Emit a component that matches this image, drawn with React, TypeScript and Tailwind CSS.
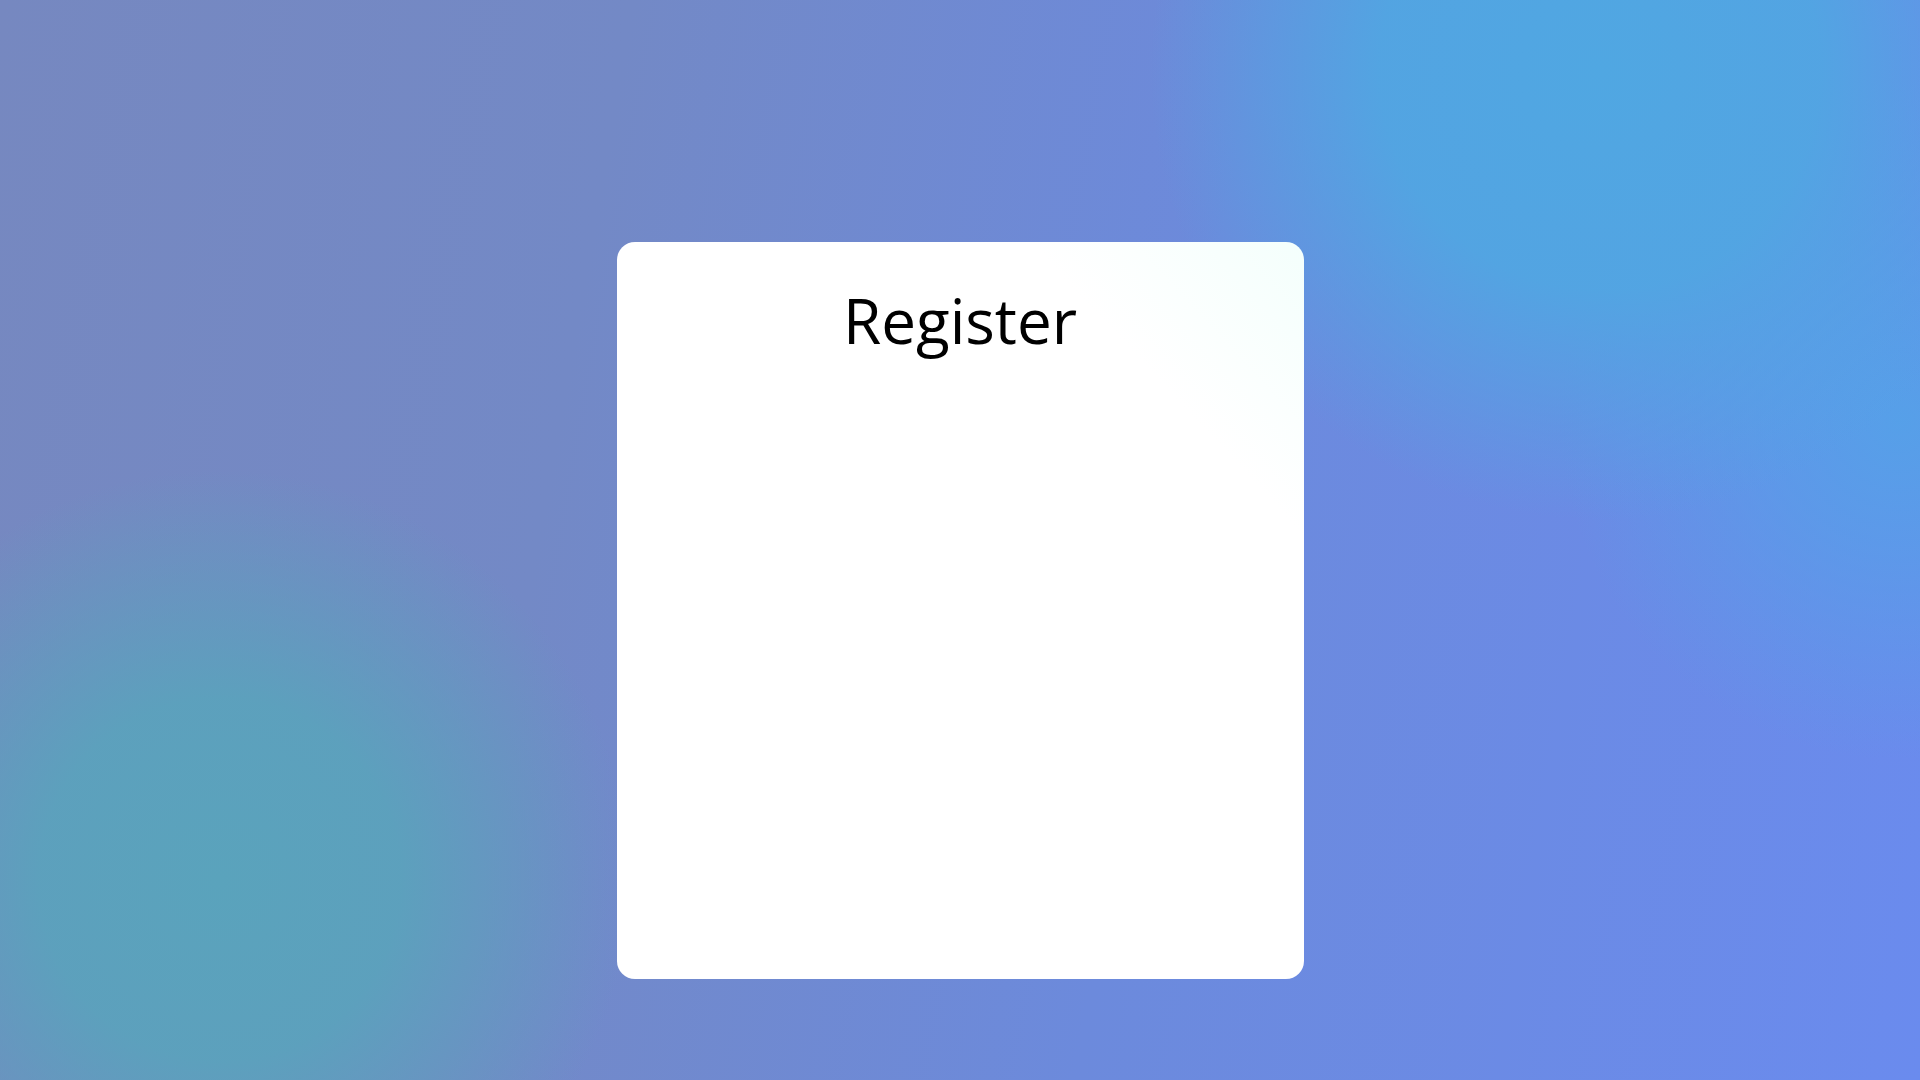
export default function App() {
  return (
    <div className="min-h-screen w-full flex justify-center pt-[242px] bg-[radial-gradient(circle_at_1600px_70px,rgba(80,167,226,1)_0px,rgba(80,167,226,0.9)_220px,rgba(80,167,226,0)_450px),radial-gradient(circle_at_1900px_420px,rgba(84,162,232,0.9)_0px,rgba(84,162,232,0.6)_130px,rgba(84,162,232,0)_340px),radial-gradient(circle_at_220px_880px,rgba(90,163,188,1)_0px,rgba(90,163,188,0.9)_180px,rgba(90,163,188,0)_410px),linear-gradient(100deg,#7688c0_0%,#7389c6_30%,#6c8adc_60%,#6a8bee_100%)]">
      <div className="w-[687px] h-[737px] rounded-[18px] bg-gradient-to-bl from-[#f4fffc] via-white via-20% to-white flex flex-col items-center pt-[41px]">
        <h1 className="text-[62px] leading-[1.2] font-normal text-black font-['Open_Sans',sans-serif]">
          Register
        </h1>
      </div>
    </div>
  );
}
